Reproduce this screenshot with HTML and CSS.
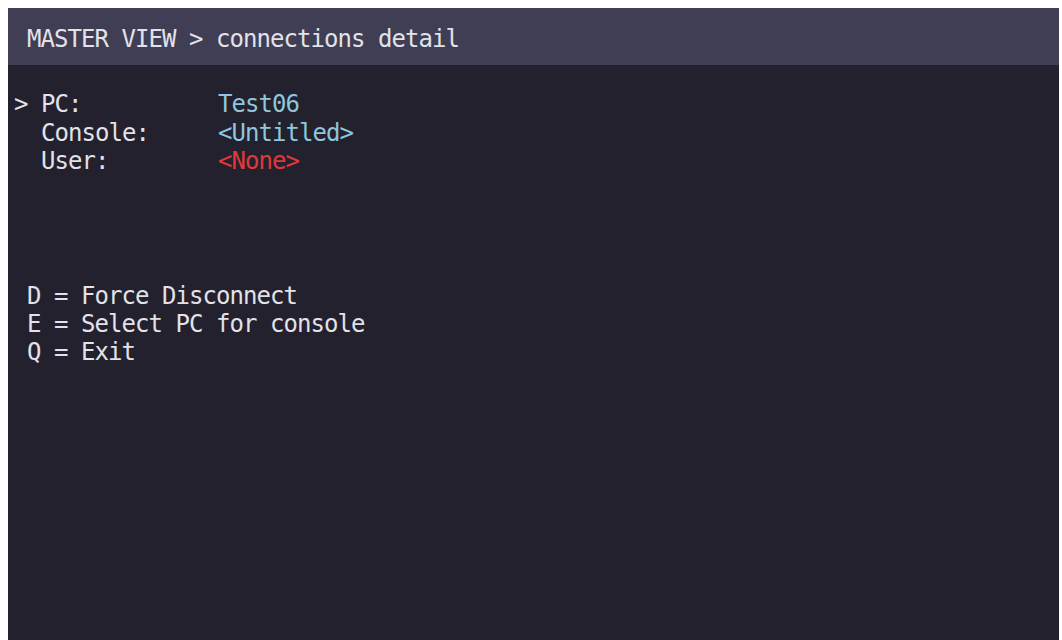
FILE: index.html
```html
<!DOCTYPE html>
<html>
<head>
<meta charset="utf-8">
<link rel="stylesheet" href="styles.css">
</head>
<body>
<div class="screen">
  <div class="titlebar"><span class="text">MASTER VIEW &gt; connections detail</span></div>
  <div class="content">
    <div class="details">
      <div class="row"><span class="marker">&gt;</span><span class="label">PC:</span><span class="value blue">Test06</span></div>
      <div class="row"><span class="marker"></span><span class="label">Console:</span><span class="value blue">&lt;Untitled&gt;</span></div>
      <div class="row"><span class="marker"></span><span class="label">User:</span><span class="value red">&lt;None&gt;</span></div>
    </div>
    <div class="menu">
      <div class="line">D = Force Disconnect</div>
      <div class="line">E = Select PC for console</div>
      <div class="line">Q = Exit</div>
    </div>
  </div>
</div>
</body>
</html>
```

FILE: styles.css
```css
html, body {
  margin: 0;
  padding: 0;
  background: #ffffff;
}
body {
  font-family: "DejaVu Sans Mono", "Liberation Mono", monospace;
  font-size: 24px;
  letter-spacing: -0.95px;
  color: #e2e2e8;
}
.screen {
  margin: 8px 3px 0 8px;
  height: 632px;
  background: #22212d;
  display: flex;
  flex-direction: column;
}
.titlebar {
  height: 57px;
  background: #3f3e55;
  display: flex;
  align-items: center;
  padding-left: 19px;
  padding-top: 5px;
  box-sizing: border-box;
  white-space: pre;
}
.content {
  padding: 25px 0 0 6px;
}
.details {
  display: flex;
  flex-direction: column;
}
.row {
  display: flex;
  height: 28.5px;
  line-height: 28.5px;
  white-space: pre;
}
.marker {
  width: 27px;
}
.label {
  width: 177px;
}
.blue {
  color: #8fc6dc;
}
.red {
  color: #e0393b;
}
.menu {
  margin-top: 106px;
  padding-left: 13px;
}
.line {
  height: 28px;
  line-height: 28px;
  white-space: pre;
}
```
